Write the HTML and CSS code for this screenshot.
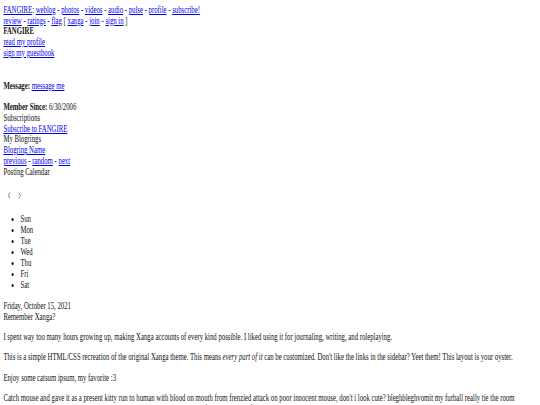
FILE: index.html
```html
<!DOCTYPE html>
<html lang="en">
<head>
<meta charset="utf-8">
<title>FANGIRE's Xanga</title>
<link rel="stylesheet" href="styles.css">
</head>
<body>
<div class="page">
  <div class="topnav">
    <a href="#">FANGIRE</a>: <a href="#">weblog</a> - <a href="#">photos</a> - <a href="#">videos</a> - <a href="#">audio</a> - <a href="#">pulse</a> - <a href="#">profile</a> - <a href="#">subscribe!</a><br>
    <a href="#">review</a> - <a href="#">ratings</a> - <a href="#">flag</a> [ <a href="#">xanga</a> - <a href="#">join</a> - <a href="#">sign in</a> ]
  </div>
  <div class="sidebar">
    <div class="profile">
      <b>FANGIRE</b><br>
      <a href="#">read my profile</a><br>
      <a href="#">sign my guestbook</a>
    </div>
    <div class="message"><b>Message:</b> <a href="#">message me</a></div>
    <div class="member">
      <b>Member Since:</b> 6/30/2006<br>
      Subscriptions<br>
      <a href="#">Subscribe to FANGIRE</a><br>
      My Blogrings<br>
      <a href="#">Blogring Name</a><br>
      <a href="#">previous</a> - <a href="#">random</a> - <a href="#">next</a><br>
      Posting Calendar
    </div>
    <div class="calendar">
      <div class="cal-nav">
        <svg class="chev" viewBox="0 0 4 7" aria-label="previous month"><path d="M3.3 0.6 L0.9 3.5 L3.3 6.4"/></svg>
        <svg class="chev" viewBox="0 0 4 7" aria-label="next month"><path d="M0.7 0.6 L3.1 3.5 L0.7 6.4"/></svg>
      </div>
      <ul class="days">
        <li>Sun</li>
        <li>Mon</li>
        <li>Tue</li>
        <li>Wed</li>
        <li>Thu</li>
        <li>Fri</li>
        <li>Sat</li>
      </ul>
    </div>
  </div>
  <div class="post">
    <div class="post-date">Friday, October 15, 2021</div>
    <div class="post-title">Remember Xanga?</div>
    <p>I spent way too many hours growing up, making Xanga accounts of every kind possible. I liked using it for journaling, writing, and roleplaying.</p>
    <p>This is a simple HTML/CSS recreation of the original Xanga theme. This means <em>every part of it</em> can be customized. Don't like the links in the sidebar? Yeet them! This layout is your oyster.</p>
    <p>Enjoy some catsum ipsum, my favorite :3</p>
    <p>Catch mouse and gave it as a present kitty run to human with blood on mouth from frenzied attack on poor innocent mouse, don't i look cute? bleghbleghvomit my furball really tie the room together yet scratch the box, so chase laser and stare at the wall, play with food and get confused by dust.</p>
  </div>
</div>
</body>
</html>
```

FILE: styles.css
```css
html, body {
  margin: 0;
  padding: 0;
  background: #ffffff;
  overflow: hidden;
}

.page {
  width: 750px;
  box-sizing: border-box;
  padding: 4.7px 4.7px 0 4.7px;
  transform: scaleX(0.72);
  transform-origin: 0 0;
  font-family: "Liberation Serif", "Times New Roman", serif;
  font-size: 9.4px;
  line-height: 10.85px;
  color: #111111;
}

a {
  color: #0000ee;
}

.message {
  margin-top: 21.9px;
}

.member {
  margin-top: 10.2px;
}

.cal-nav {
  margin-top: 12.5px;
  height: 10.85px;
  display: flex;
  align-items: center;
  gap: 10.5px;
  padding-left: 5px;
}

.chev {
  width: 5px;
  height: 7px;
  fill: none;
  stroke: #333333;
  stroke-width: 0.7;
}

.days {
  margin: 13px 0 10px 0;
  padding-left: 23.7px;
}

.days li {
  line-height: 11px;
}

.post p {
  margin: 9.4px 0;
}
```
